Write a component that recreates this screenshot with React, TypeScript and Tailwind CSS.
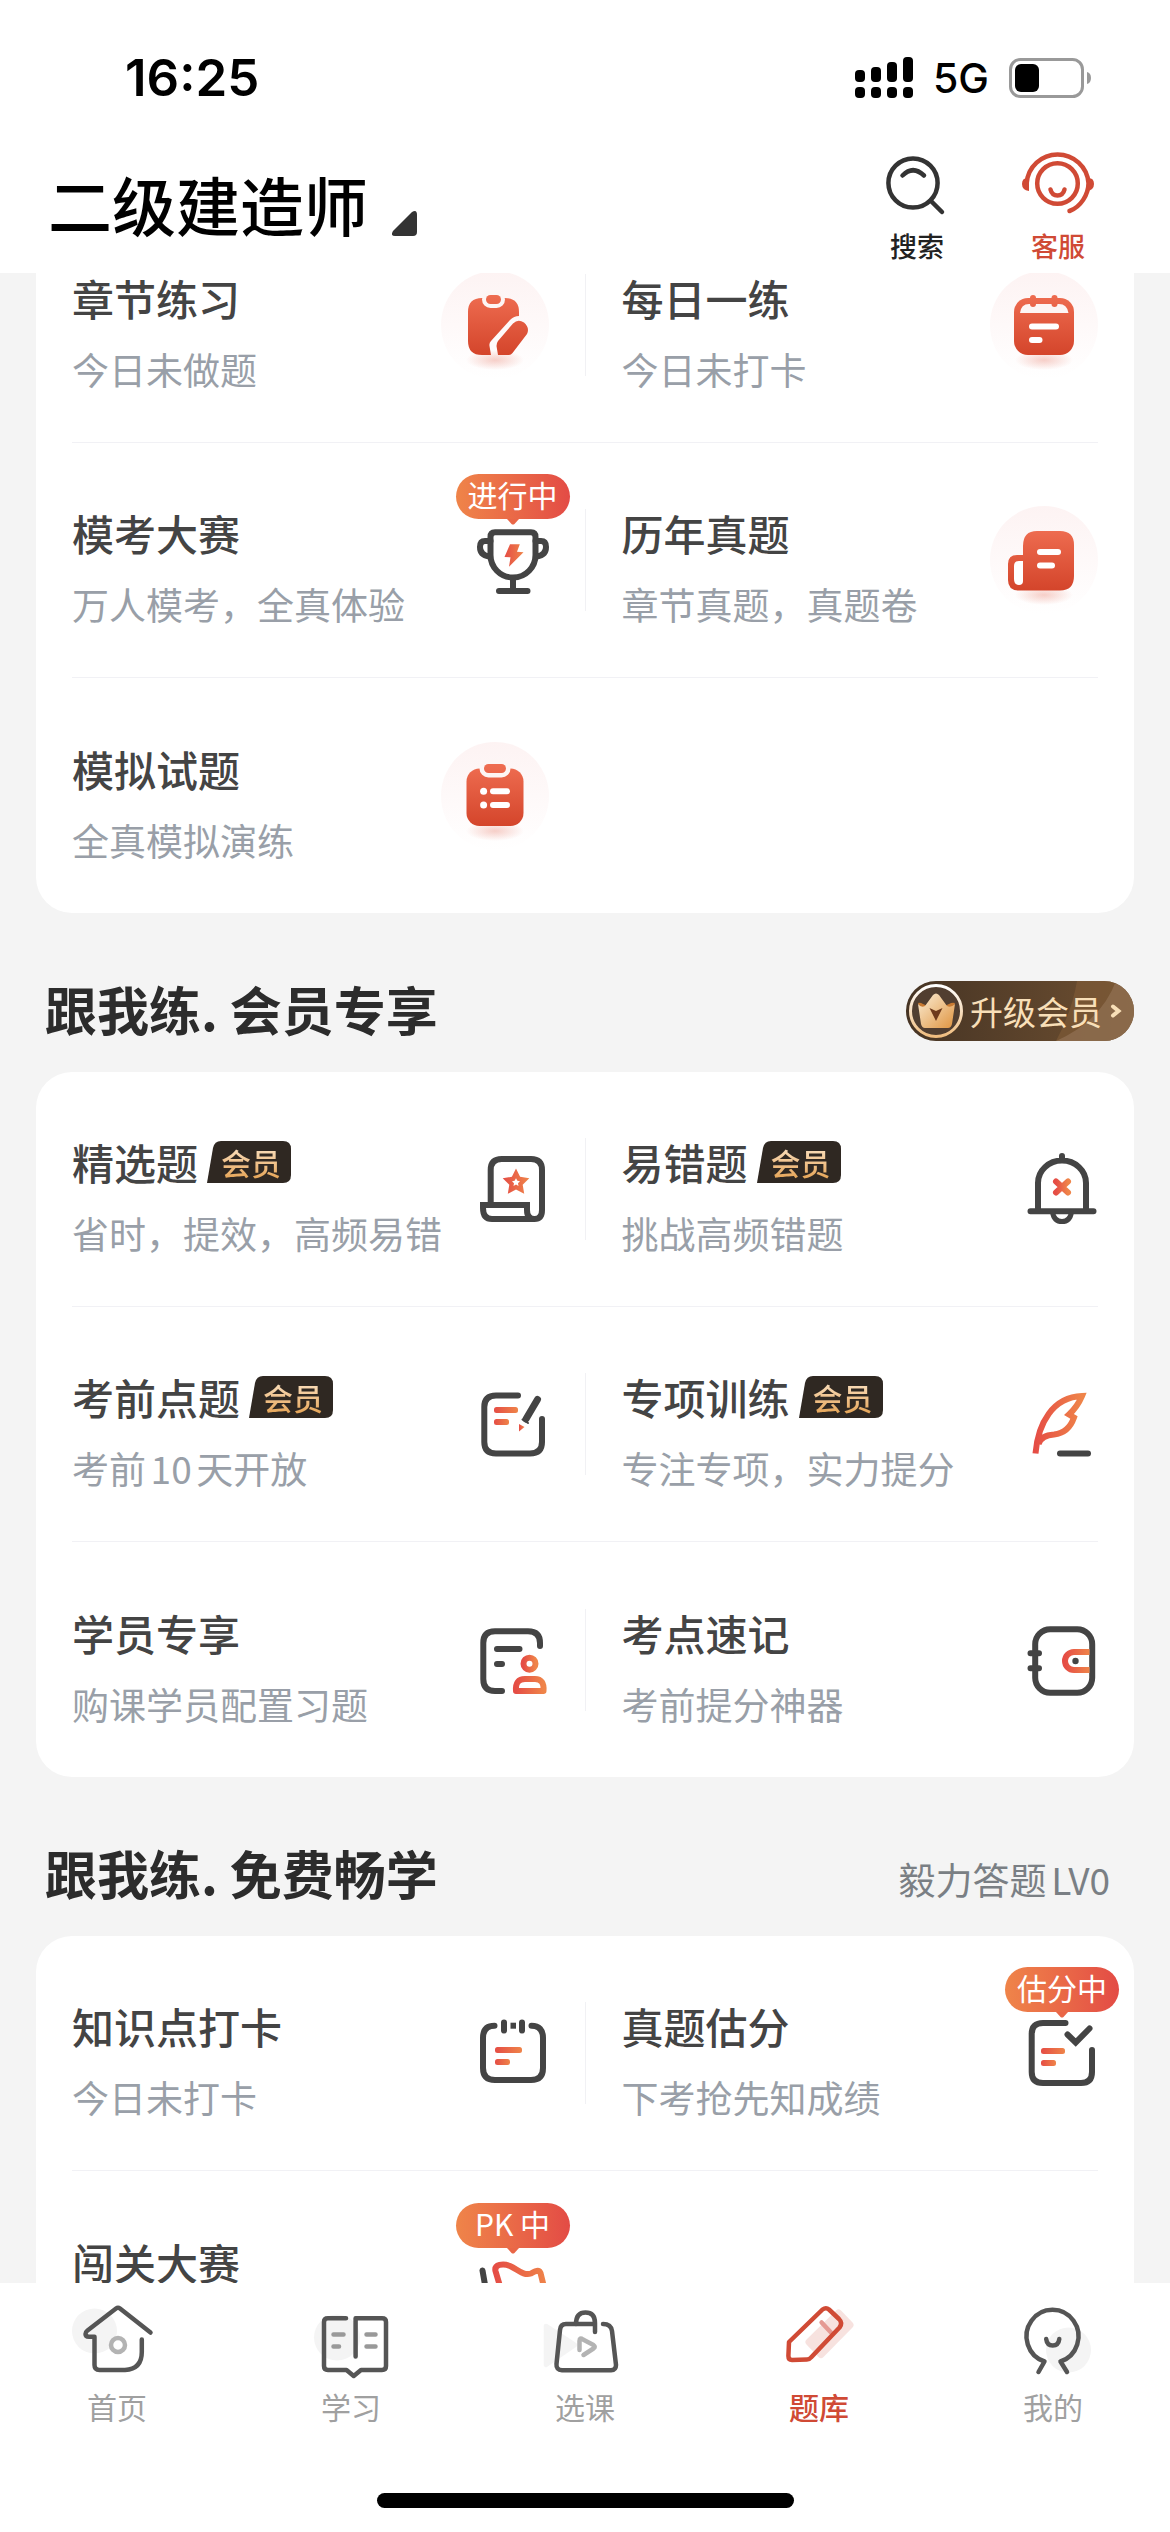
import type { ReactNode } from 'react'
import clsx from 'clsx'

type Item = {
  title: string
  desc: string
  icon: ReactNode
  vip?: boolean
  badge?: string
}

const DARK = '#444444'

/* shared gradients, referenced by id from every icon */
function Gradients() {
  return (
    <svg className="absolute h-0 w-0" aria-hidden="true">
      <defs>
        <linearGradient id="warm" x1="0" y1="0" x2="1" y2="0">
          <stop offset="0" stopColor="#e54d45" />
          <stop offset="1" stopColor="#ef8449" />
        </linearGradient>
        <linearGradient id="red" gradientUnits="userSpaceOnUse" x1="0" y1="24" x2="0" y2="84">
          <stop offset="0" stopColor="#ee6c50" />
          <stop offset="1" stopColor="#d4452b" />
        </linearGradient>
        <linearGradient id="halo" x1="0" y1="0" x2="0" y2="1">
          <stop offset="0" stopColor="#fdf3f3" />
          <stop offset="1" stopColor="#ffffff" />
        </linearGradient>
        <radialGradient id="shade">
          <stop offset="0" stopColor="#e0563f" stopOpacity="0.28" />
          <stop offset="1" stopColor="#e0563f" stopOpacity="0" />
        </radialGradient>
        <linearGradient id="ring" x1="0" y1="0" x2="0" y2="1">
          <stop offset="0" stopColor="#ffffff" />
          <stop offset="1" stopColor="#f0bd7f" />
        </linearGradient>
        <linearGradient id="crown" x1="0" y1="0" x2="1" y2="1">
          <stop offset="0" stopColor="#fbeed6" />
          <stop offset="1" stopColor="#df9440" />
        </linearGradient>
      </defs>
    </svg>
  )
}

function Halo({ children }: { children: ReactNode }) {
  return (
    <svg viewBox="0 0 108 108" className="h-[108px] w-[108px]" aria-hidden="true">
      <circle cx="54" cy="54" r="54" fill="url(#halo)" />
      <ellipse cx="54" cy="89" rx="29" ry="10" fill="url(#shade)" />
      {children}
    </svg>
  )
}

function Line({ children }: { children: ReactNode }) {
  return (
    <svg
      viewBox="0 0 72 72"
      className="h-[72px] w-[72px] overflow-visible"
      fill="none"
      stroke={DARK}
      strokeWidth="6"
      strokeLinecap="round"
      aria-hidden="true"
    >
      {children}
    </svg>
  )
}

function Bar({ x, y, w }: { x: number; y: number; w: number }) {
  return <rect x={x} y={y} width={w} height="6" rx="2.5" fill="url(#warm)" stroke="none" />
}

const ChapterIcon = (
  <Halo>
    <path
      d="M27 41Q27 27 41 27H64Q78 27 78 41V45Q73 45 69 49L50 70Q48 72 48.5 75L50 84H41Q27 84 27 70Z"
      fill="url(#red)"
    />
    <rect x="45" y="24" width="15" height="9" rx="4.5" fill="url(#red)" stroke="#fdf5f4" strokeWidth="8" paintOrder="stroke" />
    <path d="M72 52.5Q77 47.5 83 51.5Q89 57 86 63L71.5 82Q70 84 68 84H57L55.5 75Q55.5 72 57 70Z" fill="url(#red)" />
  </Halo>
)

const DailyIcon = (
  <Halo>
    <rect x="24" y="27" width="60" height="57" rx="14" fill="url(#red)" />
    <path d="M30 42Q31 33 39 33H69Q77 33 78.5 42Z" fill="#fdf5f4" />
    <rect x="40" y="24" width="6" height="12" rx="3" fill="url(#red)" />
    <rect x="61.5" y="24" width="6" height="12" rx="3" fill="url(#red)" />
    <rect x="39" y="52.5" width="30" height="6" rx="3" fill="#fff" />
    <rect x="39" y="66" width="13.5" height="6" rx="3" fill="#fff" />
  </Halo>
)

const PaperIcon = (
  <Halo>
    <path
      d="M33 40Q33 25 47 25H70Q84 25 84 39V70Q84 84.5 70 84.5H29Q18 84.5 18 74V58Q18 49 27 49H33Z"
      fill="url(#red)"
    />
    <path d="M33 55H29Q24 55 24 60V73Q24 79 29 79Q33 79 33 75Z" fill="#fff" />
    <rect x="47" y="43" width="24" height="6" rx="3" fill="#fff" />
    <rect x="47" y="56.5" width="18" height="6" rx="3" fill="#fff" />
  </Halo>
)

const MockIcon = (
  <Halo>
    <rect x="25.5" y="26.5" width="57" height="57.5" rx="13" fill="url(#red)" />
    <rect x="43" y="22" width="22" height="9" rx="4.5" fill="url(#red)" stroke="#fdf5f4" strokeWidth="9" paintOrder="stroke" />
    <circle cx="42.6" cy="49.3" r="3.5" fill="#fff" />
    <circle cx="42.6" cy="63" r="3.5" fill="#fff" />
    <rect x="49" y="46.3" width="20" height="6" rx="3" fill="#fff" />
    <rect x="49" y="60" width="20" height="6" rx="3" fill="#fff" />
  </Halo>
)

const TrophyIcon = (
  <Line>
    <path d="M13.5 13Q13.5 8.3 18 8.3H54Q58.5 8.3 58.5 13V31C58.5 43 49 53.5 36 53.5C23 53.5 13.5 43 13.5 31Z" />
    <path d="M36 54V67M22 67H50.5" />
    <path d="M13.5 17H8Q3 17 3 23Q3 31 12 32.5M58.5 17H64Q69 17 69 23Q69 31 60 32.5" />
    <path d="M33 20.3H42.8L40 27.7L46.5 28.3L32 42.7L33.5 33.3L27.5 33Z" fill="url(#warm)" stroke="none" />
  </Line>
)

const StarIcon = (
  <Line>
    <path
      d="M13.7 52V17Q13.7 6 24.7 6H54Q65 6 65 17V57Q65 66 57.5 66Q50 66 50 57V52H6V55Q6 66 15 66H57.5"
      strokeLinecap="butt"
    />
    <path
      d="M39 15.5L43.1 23.8L52.3 25.2L45.7 31.7L47.2 40.8L39 36.5L30.8 40.8L32.3 31.7L25.7 25.2L34.9 23.8ZM39 25.3L37.6 27.8L35 28.2L37 30.2L36.5 32.9L39 31.6L41.5 32.9L41 30.2L43 28.2L40.4 27.8Z"
      fill="url(#warm)"
      fillRule="evenodd"
      stroke="none"
    />
  </Line>
)

const BellIcon = (
  <Line>
    <path d="M12 58V30A24 22.4 0 0 1 60 30V58M4.5 58.3H67.5M36 3V7" />
    <path d="M26.5 59Q28 68.5 36 68.5Q44 68.5 45.5 59" strokeWidth="5" />
    <path d="M30 28.5L42 39.5M42 28.5L30 39.5" stroke="url(#warm)" />
  </Line>
)

const NoteIcon = (
  <Line>
    <path d="M41 7.5H19Q7.3 7.5 7.3 19V54Q7.3 65.5 19 65.5H53Q65 65.5 65 54V31" />
    <Bar x={17} y={19} w={24} />
    <Bar x={17} y={31} w={15} />
    <path d="M60.5 11.5L49 31" strokeWidth="7" />
    <path d="M45.5 31.5L51 35" strokeWidth="2" />
    <path d="M42 36L47.5 39L42 43.5Z" fill="url(#warm)" stroke="none" />
  </Line>
)

const FeatherIcon = (
  <Line>
    <path
      d="M9.5 65.5C12 35 27 9 56 8C53 15 49 21 43 26.5L48 29.5C44 41 37 45.5 28 46.5C20 47 14.5 50 12.5 56"
      stroke="url(#warm)"
      strokeLinecap="butt"
    />
    <path d="M34 65.5H62" />
  </Line>
)

const MemberIcon = (
  <Line>
    <path d="M63 22V19Q63 7.3 51 7.3H18Q6.3 7.3 6.3 19V55Q6.3 67 18 67H25M20 25H42.5M20 40H25" />
    <circle cx="52.5" cy="39.7" r="6" stroke="url(#warm)" />
    <path d="M39 67Q38 55 48 55H58Q67.5 55 66.5 67Z" stroke="url(#warm)" strokeLinejoin="round" />
  </Line>
)

const NotebookIcon = (
  <Line>
    <rect x="9.2" y="5.2" width="57" height="63.6" rx="15" />
    <path d="M4.5 29.3H13M4.5 44.3H13" />
    <path d="M63.5 28H48A9 9 0 0 0 48 46H63.5" stroke="url(#warm)" strokeLinecap="butt" />
    <circle cx="49.5" cy="37" r="3.2" fill={DARK} stroke="none" />
  </Line>
)

const CheckInIcon = (
  <Line>
    <path d="M17.5 8.7Q6 8.7 6 21V51Q6 63 18 63H54Q66 63 66 51V21Q66 8.7 54.5 8.7M27 5.5V13.5M45 5.5V13.5" />
    <path d="M33.5 8.7H39" strokeLinecap="butt" />
    <Bar x={18} y={30} w={27} />
    <Bar x={18} y={42} w={15} />
  </Line>
)

const ScoreIcon = (
  <Line>
    <path d="M39.5 6H17Q5.7 6 5.7 17V55Q5.7 66 17 66H55Q66 66 66 55V33" />
    <path d="M41.5 17.5L49.7 25.5L63.5 11.5" />
    <Bar x={15} y={31} w={24} />
    <Bar x={15} y={43} w={15} />
  </Line>
)

const FlagIcon = (
  <Line>
    <path d="M5.5 17.5L14 66" />
    <path
      d="M28 50L18.5 18C17 11.5 26 10 33 13C41 16.5 46 23 54 20.5C60 17 63 16 64 22L70 46Z"
      stroke="url(#warm)"
    />
  </Line>
)

const practiceItems: Item[] = [
  { title: '章节练习', desc: '今日未做题', icon: ChapterIcon },
  { title: '每日一练', desc: '今日未打卡', icon: DailyIcon },
  { title: '模考大赛', desc: '万人模考，全真体验', icon: TrophyIcon, badge: '进行中' },
  { title: '历年真题', desc: '章节真题，真题卷', icon: PaperIcon },
  { title: '模拟试题', desc: '全真模拟演练', icon: MockIcon },
]

const vipItems: Item[] = [
  { title: '精选题', desc: '省时，提效，高频易错', icon: StarIcon, vip: true },
  { title: '易错题', desc: '挑战高频错题', icon: BellIcon, vip: true },
  { title: '考前点题', desc: '考前10天开放', icon: NoteIcon, vip: true },
  { title: '专项训练', desc: '专注专项，实力提分', icon: FeatherIcon, vip: true },
  { title: '学员专享', desc: '购课学员配置习题', icon: MemberIcon },
  { title: '考点速记', desc: '考前提分神器', icon: NotebookIcon },
]

const freeItems: Item[] = [
  { title: '知识点打卡', desc: '今日未打卡', icon: CheckInIcon },
  { title: '真题估分', desc: '下考抢先知成绩', icon: ScoreIcon, badge: '估分中' },
  { title: '闯关大赛', desc: '', icon: FlagIcon, badge: 'PK 中' },
]

function VipTag() {
  return (
    <span className="relative flex h-[42px] w-[84px] items-center justify-center">
      <svg viewBox="0 0 84 42" className="absolute inset-0" aria-hidden="true">
        <path d="M0 42L6 7Q7.5 0 14 0H76Q84 0 84 8V34Q84 42 76 42Z" fill="#2f2822" />
      </svg>
      <span className="relative ml-1 bg-gradient-to-b from-[#fdebd2] to-[#e29d45] bg-clip-text text-[30px] leading-[42px] font-medium text-transparent">
        会员
      </span>
    </span>
  )
}

function Badge({ text }: { text: string }) {
  return (
    <span className="absolute -top-[50px] left-1/2 flex h-[45px] w-[114px] -translate-x-1/2 items-center justify-center rounded-full bg-gradient-to-r from-[#ef8449] to-[#e34b45] pb-1 text-[30px] leading-[41px] text-white">
      {text}
      <svg viewBox="0 0 12 6" className="absolute top-full h-[6px] w-[12px]" aria-hidden="true">
        <path d="M0 0H12L7.5 5Q6 6 4.5 5Z" fill="#e96647" />
      </svg>
    </span>
  )
}

function Cell({ item }: { item: Item }) {
  return (
    <button type="button" className="flex min-w-0 flex-1 items-center justify-between text-left">
      <div className="pt-[18px]">
        <div className="flex items-center gap-[9px] text-[42px] leading-[48px] font-medium text-[#444444]">
          {item.title}
          {item.vip && <VipTag />}
        </div>
        <p className="mt-[22px] h-[50px] text-[37px] leading-[50px] whitespace-nowrap text-[#999fa8] [text-autospace:normal]">
          {item.desc}
        </p>
      </div>
      <div className="relative shrink-0">
        {item.icon}
        {item.badge && <Badge text={item.badge} />}
      </div>
    </button>
  )
}

function Card({ items }: { items: Item[] }) {
  const rows: Item[][] = []
  for (let i = 0; i < items.length; i += 2) rows.push(items.slice(i, i + 2))

  return (
    <div className="mx-9 rounded-[36px] bg-white px-9">
      {rows.map((row, i) => (
        <div
          key={row[0].title}
          className={clsx('flex h-[235px] items-center gap-9', i < rows.length - 1 && 'border-b border-[#f1f1f5]')}
        >
          <Cell item={row[0]} />
          <div className={clsx('h-[102px] w-px', row[1] && 'bg-[#f1f1f4]')}></div>
          {row[1] ? <Cell item={row[1]} /> : <div className="flex-1"></div>}
        </div>
      ))}
    </div>
  )
}

function SectionHead({ title, children }: { title: string; children: ReactNode }) {
  return (
    <div className="flex h-[159px] items-center justify-between pt-9 pr-9 pl-[45px]">
      <h2 className="pb-1 text-[52px] leading-[72px] font-bold text-[#2c2c2c]">{title}</h2>
      {children}
    </div>
  )
}

function StatusBar() {
  return (
    <div className="flex h-[150px] items-center justify-between pt-1.5 pr-[78px] pl-[125px] font-['Inter',sans-serif] text-black">
      <span className="text-[51px] leading-[60px] font-semibold">16:25</span>
      <div className="flex items-center gap-5">
        <svg viewBox="0 0 58 42" className="h-[42px] w-[58px]" aria-hidden="true">
          <rect x="0" y="13" width="10" height="12" rx="4" />
          <rect x="16" y="10" width="10" height="15" rx="4" />
          <rect x="32" y="5" width="10" height="20" rx="4" />
          <rect x="48" y="0" width="10" height="25" rx="4" />
          <rect x="0" y="30" width="10" height="11" rx="4" />
          <rect x="16" y="30" width="10" height="11" rx="4" />
          <rect x="32" y="30" width="10" height="11" rx="4" />
          <rect x="48" y="30" width="10" height="11" rx="4" />
        </svg>
        <span className="text-[41px] leading-[48px] font-medium">5G</span>
        <svg viewBox="0 0 83 40" className="h-[40px] w-[83px]" aria-hidden="true">
          <rect x="1.5" y="1.5" width="72" height="37" rx="10" fill="none" stroke="#999" strokeWidth="3" />
          <rect x="6" y="6" width="24" height="28" rx="6" />
          <path d="M78 14Q82 15 82 20Q82 25 78 26Z" fill="#999" />
        </svg>
      </div>
    </div>
  )
}

function Header() {
  return (
    <header className="relative z-10 shrink-0 bg-white">
      <StatusBar />
      <div className="flex h-[123px] items-start justify-between pr-[76px] pl-12">
        <button type="button" className="flex items-end gap-6 pt-2">
          <span className="text-[64px] leading-[90px] font-medium text-black">二级建造师</span>
          <svg viewBox="0 0 25 25" className="mb-3 h-[25px] w-[25px]" aria-hidden="true">
            <path d="M20 1Q25-2 25 4V21Q25 25 21 25H3Q-2 25 1 20Z" fill="#333" />
          </svg>
        </button>
        <div className="flex gap-[69px] text-[27px] leading-9 font-medium">
          <button type="button" className="flex w-[72px] flex-col items-center gap-3 text-[#222]">
            <svg viewBox="0 0 72 66" className="h-[66px] w-[72px]" fill="none" stroke="#333" strokeWidth="4.5" strokeLinecap="round" aria-hidden="true">
              <circle cx="32" cy="33" r="24.6" />
              <path d="M21.5 25.5Q32 15 43 25.5M50 51L61 62" />
            </svg>
            搜索
          </button>
          <button type="button" className="flex w-[72px] flex-col items-center gap-3 text-[#d04a35]">
            <svg viewBox="0 0 72 66" className="h-[66px] w-[72px] overflow-visible" fill="none" stroke="#d04a35" strokeWidth="4.5" strokeLinecap="round" aria-hidden="true">
              <circle cx="35.5" cy="33.5" r="20.3" />
              <path d="M4.7 36V33A31 31 0 0 1 66.5 33C66.5 44 59 57 47.5 61" />
              <path d="M28.5 39.5Q30 45.5 35.5 45.5Q41 45.5 42.5 39.5" />
              <path d="M7 41V28Q0 27 0 34Q0 40 7 41ZM65 41V28Q72 27 72 34Q72 40 65 41Z" fill="#d04a35" stroke="none" />
            </svg>
            客服
          </button>
        </div>
      </div>
    </header>
  )
}

const tabs = [
  {
    label: '首页',
    icon: (
      <>
        <circle cx="22.5" cy="27" r="22.5" fill="#f4f4f4" stroke="none" />
        <path d="M78.5 28.5L48 4.5Q46 3 44 4.5L15.5 26.5Q13.5 28 13.5 30Q13.5 32.7 17 32.7H22.5V61Q22.5 66 27.5 66H53Q69.8 65 69.8 48V35.5" />
        <circle cx="46" cy="41" r="7" stroke="#b3b3b3" />
      </>
    ),
  },
  {
    label: '学习',
    icon: (
      <>
        <circle cx="31" cy="33.5" r="23" fill="#f4f4f4" stroke="none" />
        <path d="M40 14.3H22Q18 14.3 18 18V62Q18 66 22 66H40.5L47.7 72L55 66H76Q80 66 80 62V18Q80 14.3 76 14.3H49.6V52.5" />
        <path d="M27.5 30.5H37.5M27.5 42.5H33M60.5 30.5H69.5M60.5 42.5H69.5" stroke="#999" />
      </>
    ),
  },
  {
    label: '选课',
    icon: (
      <>
        <path d="M6 22L35 41L6 61Z" fill="#f4f4f4" stroke="#f4f4f4" />
        <path d="M63 20Q71 20 72 27L76 61Q76 66 71 66.3H22Q16 66 16.5 60L20 26Q20.5 20 26 20H54.5" />
        <path d="M36 20Q36 8.5 45.5 8.5Q55 8.5 55 19V28" />
        <path d="M39.5 46V37Q39.5 33 43 35.5L53.5 41Q56 42.7 53.5 44.5L43.5 51" stroke="#b3b3b3" />
      </>
    ),
  },
  {
    label: '题库',
    icon: (
      <>
        <path d="M64.5 9L76 21L47 50.5L35 38Z" fill="#f7e2df" stroke="#f7e2df" strokeWidth="7" />
        <path d="M47.6 18.5L57 28.5" stroke="#e59a93" />
        <path d="M48.5 5.5Q52 3 55 5.5L65 15Q69 19 65.5 23.5L37 53.5Q35.5 55.5 33 55.5L18 56Q14.4 56 14.4 52L15 38Z" stroke="#d04a35" />
      </>
    ),
  },
  {
    label: '我的',
    icon: (
      <>
        <circle cx="60.5" cy="46" r="22.5" fill="#f4f4f4" stroke="none" />
        <path d="M30.5 68L36.5 57.5A26 26.5 0 1 1 52.5 57.5L59 68M38.2 35Q39 41.5 44.7 41.5Q50.5 41.5 51.3 35" />
      </>
    ),
  },
]

function TabBar() {
  return (
    <nav className="relative z-10 flex h-[249px] shrink-0 flex-col items-center justify-between bg-white pt-[21px] pb-6">
      <div className="flex w-full">
        {tabs.map((tab) => (
          <a
            key={tab.label}
            href="#"
            className={clsx(
              'flex flex-1 flex-col items-center text-[30px] leading-[44px]',
              tab.label === '题库' ? 'font-medium text-[#d04a35]' : 'text-[#a0a0a0]',
            )}
          >
            <svg
              viewBox="0 0 90 80"
              className="h-[80px] w-[90px]"
              fill="none"
              stroke="#555"
              strokeWidth="4.5"
              strokeLinecap="round"
              strokeLinejoin="round"
              aria-hidden="true"
            >
              {tab.icon}
            </svg>
            {tab.label}
          </a>
        ))}
      </div>
      <div className="h-[15px] w-[417px] rounded-full bg-black"></div>
    </nav>
  )
}

function UpgradeButton() {
  return (
    <button
      type="button"
      className="relative flex h-[60px] w-[228px] items-center overflow-hidden rounded-full bg-gradient-to-r from-[#463424] to-[#6f5031] text-[33px] leading-[60px] text-[#f8dfb8]"
    >
      <svg viewBox="0 0 228 60" className="absolute inset-0" aria-hidden="true">
        <path d="M171 0H228V60H150Q166 30 171 0Z" fill="#7d5a36" fillOpacity="0.7" />
        <path d="M210 0H228V60H150Q195 40 210 0Z" fill="#96765a" fillOpacity="0.6" />
      </svg>
      <svg viewBox="0 0 60 60" className="relative h-[60px] w-[60px] shrink-0" aria-hidden="true">
        <circle cx="30" cy="30" r="25.5" fill="#513e30" stroke="url(#ring)" strokeWidth="3" />
        <path d="M12 22Q14 21 17 23L24 26H36L43 23Q46 21 49 22L44 32H16Z" fill="#c87a32" />
        <path d="M12 23Q15 27 19 25L27 14Q30 11 33 14L41 25Q45 27 49 23L46 43Q45 47 42 47H19Q16 47 15 43Z" fill="url(#crown)" />
        <path d="M23.5 27L30 30L36.5 27L30 40Z" fill="#6e3a1c" />
      </svg>
      <span className="relative ml-1">升级会员</span>
      <svg viewBox="0 0 12 16" className="relative ml-2 h-4 w-3" fill="none" stroke="#f8dfb8" strokeWidth="4" strokeLinecap="round" aria-hidden="true">
        <path d="M3 3.500L8.500 8L3 12.500" />
      </svg>
    </button>
  )
}

export default function App() {
  return (
    <div className="flex h-screen flex-col overflow-hidden bg-[#f4f4f4] font-['Noto_Sans_CJK_SC',sans-serif]">
      <Gradients />
      <Header />
      <main className="min-h-0 flex-1 overflow-hidden">
        {/* list is scrolled a little under the header */}
        <div className="-mt-[65px]">
          <Card items={practiceItems} />
          <SectionHead title="跟我练. 会员专享">
            <UpgradeButton />
          </SectionHead>
          <Card items={vipItems} />
          <SectionHead title="跟我练. 免费畅学">
            <span className="pt-2 pr-6 text-[37px] leading-[50px] text-[#7a7f84] [text-autospace:normal]">毅力答题LV0</span>
          </SectionHead>
          <Card items={freeItems} />
        </div>
      </main>
      <TabBar />
    </div>
  )
}
